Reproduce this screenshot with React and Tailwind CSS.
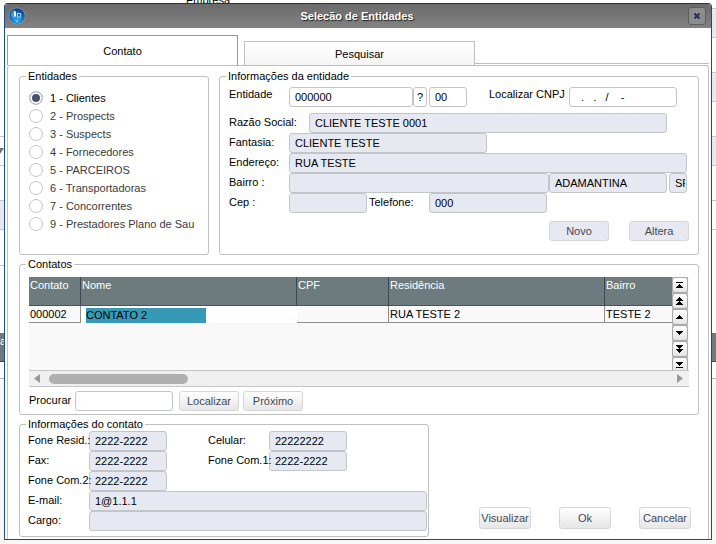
import React, { useState } from 'react';
import clsx from 'clsx';

const entidades = [
  '1 - Clientes',
  '2 - Prospects',
  '3 - Suspects',
  '4 - Fornecedores',
  '5 - PARCEIROS',
  '6 - Transportadoras',
  '7 - Concorrentes',
  '9 - Prestadores Plano de Sau',
];

const navIcons = [
  { label: 'Primeiro', d: 'M3 4h7v1H3z M6 6h1v1h1v1h1v1h1v1H3V9h1V8h1V7h1z' },
  { label: 'Página anterior', d: 'M6 3h1v1h1v1h1v1h1v1H3V6h1V5h1V4h1z M6 7h1v1h1v1h1v1h1v1H3v-1h1V9h1V8h1z' },
  { label: 'Anterior', d: 'M6 5h1v1h1v1h1v1h1v1H3V8h1V7h1V6h1z' },
  { label: 'Próximo registro', d: 'M3 5h7v1H9v1H8v1H7v1H6V8H5V7H4V6H3z' },
  { label: 'Próxima página', d: 'M3 3h7v1H9v1H8v1H7v1H6V6H5V5H4V4H3z M3 7h7v1H9v1H8v1H7v1H6v-1H5V9H4V8H3z' },
  { label: 'Último', d: 'M3 4h7v1H9v1H8v1H7v1H6V7H5V6H4V5H3z M3 9h7v1H3z' },
];

function Group({ title, className, children }) {
  return (
    <fieldset className={clsx('min-w-0 rounded-[3px] border border-[#c0c0c0]', className)}>
      <legend className="ml-[6px] px-[2px] leading-[14px]">{title}</legend>
      {children}
    </fieldset>
  );
}

function Field({ className, white, ...props }) {
  return (
    <input
      type="text"
      className={clsx(
        'h-5 min-w-0 rounded-[3px] border border-[#c3c6c9] pl-[5px] outline-none',
        white ? 'bg-white' : 'bg-[#e6e9f1]',
        className
      )}
      {...props}
    />
  );
}

function Label({ className, ...props }) {
  return <label className={clsx('relative shrink-0 whitespace-nowrap', className)} {...props} />;
}

function Button({ className, children }) {
  return (
    <button
      type="button"
      className={clsx('shrink-0 rounded-[3px] border border-[#d5d7da] text-center text-[#444955]', className)}
    >
      {children}
    </button>
  );
}

// Parts of the main screen that show around the dialog
function Backdrop() {
  return (
    <div className="absolute inset-0 overflow-hidden" aria-hidden="true">
      <div className="absolute inset-x-0 top-[378px] bottom-0 border-t border-[#b5b5b5] bg-[#f8f8f8]" />
      <span className="absolute -top-[7px] left-[186px] leading-[14px]">Empresa</span>
      <div className="absolute top-[8px] right-0 h-[30px] w-3 border-y border-[#c3c6c9] bg-[#e6e9f1]" />
      <div className="absolute top-[72px] right-0 h-[30px] w-3 border-y border-[#c3c6c9] bg-[#e6e9f1]" />
      <div className="absolute top-[136px] right-0 h-[30px] w-3 border-y border-[#c3c6c9] bg-[#e6e9f1]" />
      <div className="absolute top-[200px] right-0 h-[30px] w-3 border-y border-[#c3c6c9]" />
      <div className="absolute top-[136px] left-0 h-[30px] w-3 border-y border-[#c3c6c9]" />
      <svg className="absolute top-[148px] left-0" width="4" height="6">
        <path d="M0 0h4L0 6z" fill="#6b7488" />
      </svg>
      <div className="absolute top-[200px] left-0 h-[30px] w-3 border-y border-[#c3c6c9] bg-[#e6e9f1]" />
      <div className="absolute top-[265px] left-0 h-px w-3 bg-[#c3c6c9]" />
      <div className="absolute inset-x-0 top-[333px] h-[29px] border-b border-[#444] bg-[#6d7b7e] leading-[16px] text-white">
        a
      </div>
    </div>
  );
}

function Logo() {
  return (
    <svg width="18" height="18" viewBox="0 0 18 18">
      <defs>
        <radialGradient id="globe" cx="0.5" cy="0.75" r="0.7">
          <stop offset="0" stopColor="#35b4f0" />
          <stop offset="0.5" stopColor="#1878c8" />
          <stop offset="1" stopColor="#0b3f86" />
        </radialGradient>
      </defs>
      <circle cx="9" cy="9" r="8.5" fill="#8d9dab" />
      <circle cx="9" cy="9" r="7.8" fill="url(#globe)" />
      <path d="M2.500 8A7 7 0 0 1 7 2.500V10.500H4z" fill="#5aa5e0" opacity="0.7" />
      <path d="M6 4.500h2v5H6z" fill="#fff" />
      <path d="M9 6h4v4.500H9z" fill="#9fd2f3" />
      <path d="M10 7h2v2.500h-2z" fill="#1b6fbd" />
      <path d="M8 14h2v1H8z" fill="#8be0ff" />
    </svg>
  );
}

function EntidadeInfo() {
  return (
    <Group title="Informações da entidade" className="flex-1">
      <div className="pt-[4px] pr-[9px] pb-[13px] pl-[9px]">
        <div className="mb-[6px] flex">
          <Label htmlFor="entidade" className="w-[60px] leading-[14px]">Entidade</Label>
          <Field id="entidade" white defaultValue="000000" className="w-[124px]" />
          <button type="button" className="h-5 w-[14px] rounded-[3px] border border-[#c3c6c9] bg-white">?</button>
          <Field aria-label="Loja" white defaultValue="00" className="ml-[2px] w-[38px]" />
          <Label htmlFor="cnpj" className="ml-[22px] w-[80px] leading-[14px]">Localizar CNPJ</Label>
          <Field id="cnpj" white defaultValue="  .   .   /    -" className="w-[108px]" />
        </div>
        <div className="flex pr-[22px]">
          <Label htmlFor="razao" className="w-[80px] leading-[18px]">Razão Social:</Label>
          <Field id="razao" readOnly value="CLIENTE TESTE 0001" className="flex-1" />
        </div>
        <div className="flex">
          <Label htmlFor="fantasia" className="w-[60px] leading-[18px]">Fantasia:</Label>
          <Field id="fantasia" readOnly value="CLIENTE TESTE" className="w-[198px]" />
        </div>
        <div className="flex pr-[2px]">
          <Label htmlFor="endereco" className="w-[60px] leading-[18px]">Endereço:</Label>
          <Field id="endereco" readOnly value="RUA TESTE" className="flex-1" />
        </div>
        <div className="flex pr-[2px]">
          <Label htmlFor="bairro" className="w-[60px] leading-[18px]">Bairro :</Label>
          <Field id="bairro" readOnly value="" className="flex-1" />
          <Field aria-label="Cidade" readOnly value="ADAMANTINA" className="w-[118px]" />
          <Field aria-label="UF" readOnly value="SP" className="ml-[2px] w-[18px] pr-[1px]" />
        </div>
        <div className="flex">
          <Label htmlFor="cep" className="w-[60px] leading-[18px]">Cep :</Label>
          <Field id="cep" readOnly value="" className="w-[78px]" />
          <Label htmlFor="telefone" className="ml-[2px] w-[60px] leading-[18px]">Telefone:</Label>
          <Field id="telefone" readOnly value="000" className="w-[118px]" />
        </div>
        <div className="mt-2 flex justify-end gap-5">
          <Button className="h-5 w-[60px] bg-[#e6e9f1]">Novo</Button>
          <Button className="h-5 w-[60px] bg-[#e6e9f1]">Altera</Button>
        </div>
      </div>
    </Group>
  );
}

function Contatos() {
  const th = 'border-r border-b border-r-[#3f484b] border-b-[#4a5356] px-[1px] text-left align-top font-normal leading-[16px]';
  const td = 'border-r border-b border-[#8f8f8f] px-[1px] leading-[15px]';
  return (
    <Group title="Contatos" className="mt-[2px]">
      <div className="px-[9px] pt-[6px] pb-[3px]">
        <div className="flex h-[93px] bg-[#f9f9f9]">
          <div className="min-w-0 flex-1">
            <table className="w-full table-fixed border-separate border-spacing-0">
              <thead>
                <tr className="h-[29px] bg-[#6d7b7e] text-white">
                  <th className={clsx(th, 'w-[52px]')}>Contato</th>
                  <th className={clsx(th, 'w-[216px]')}>Nome</th>
                  <th className={clsx(th, 'w-[92px]')}>CPF</th>
                  <th className={clsx(th, 'w-[216px]')}>Residência</th>
                  <th className={clsx(th, 'border-r-0')}>Bairro</th>
                </tr>
              </thead>
              <tbody>
                <tr className="h-4">
                  <td className={td}>000002</td>
                  <td className="bg-white pt-[2px] pl-[5px]">
                    <input
                      aria-label="Nome"
                      defaultValue="CONTATO 2"
                      className="block h-[15px] w-[120px] bg-[#369ab6] outline-none"
                    />
                  </td>
                  <td className={td}></td>
                  <td className={td}>RUA TESTE 2</td>
                  <td className={clsx(td, 'border-r-0')}>TESTE 2</td>
                </tr>
              </tbody>
            </table>
          </div>
          <div className="mr-[1px] flex w-4 flex-col overflow-hidden bg-[#bdbdbd]">
            {navIcons.map((n) => (
              <button
                key={n.label}
                type="button"
                aria-label={n.label}
                className="h-4 shrink-0 rounded-[3px] border border-[#a8a8a8] bg-linear-to-b from-white to-[#e4e4e4]"
              >
                <svg width="14" height="14" className="block" shapeRendering="crispEdges">
                  <path d={n.d} fill="#000" />
                </svg>
              </button>
            ))}
          </div>
        </div>
        <div className="flex h-[17px] items-center border-y border-[#c6c6c6] bg-[#f0f0f0] px-[5px]">
          <svg width="7" height="9"><path d="M6 0v9L0 4.500z" fill="#999" /></svg>
          <div className="mx-2 flex-1">
            <div className="h-[10px] w-[139px] rounded-full bg-[#b0b0b0]" />
          </div>
          <svg width="7" height="9"><path d="M0 0v9L6 4.500z" fill="#999" /></svg>
        </div>
        <div className="mt-[4px] flex">
          <Label htmlFor="procurar" className="w-[46px] leading-[18px]">Procurar</Label>
          <Field id="procurar" white className="w-[98px]" />
          <Button className="ml-[6px] h-5 w-[60px] bg-linear-to-b from-white to-[#e6e6e6]">Localizar</Button>
          <Button className="ml-1 h-5 w-[60px] bg-linear-to-b from-white to-[#e6e6e6]">Próximo</Button>
        </div>
      </div>
    </Group>
  );
}

function ContatoInfo() {
  return (
    <Group title="Informações do contato" className="w-[410px]">
      <div className="pr-[1px] pb-[5px] pl-[8px]">
        <div className="flex">
          <Label htmlFor="resid" className="w-[61px] leading-[18px]">Fone Resid.:</Label>
          <Field id="resid" readOnly value="2222-2222" className="w-[78px]" />
          <Label htmlFor="celular" className="ml-[41px] w-[61px] leading-[18px]">Celular:</Label>
          <Field id="celular" readOnly value="22222222" className="w-[78px]" />
        </div>
        <div className="flex">
          <Label htmlFor="fax" className="w-[61px] leading-[18px]">Fax:</Label>
          <Field id="fax" readOnly value="2222-2222" className="w-[78px]" />
          <Label htmlFor="com1" className="ml-[41px] w-[61px] leading-[18px]">Fone Com.1:</Label>
          <Field id="com1" readOnly value="2222-2222" className="w-[78px]" />
        </div>
        <div className="flex">
          <Label htmlFor="com2" className="w-[61px] leading-[18px]">Fone Com.2:</Label>
          <Field id="com2" readOnly value="2222-2222" className="w-[78px]" />
        </div>
        <div className="flex">
          <Label htmlFor="email" className="w-[61px] leading-[18px]">E-mail:</Label>
          <Field id="email" readOnly value="1@1.1.1" className="flex-1" />
        </div>
        <div className="flex">
          <Label htmlFor="cargo" className="w-[61px] leading-[18px]">Cargo:</Label>
          <Field id="cargo" readOnly value="" className="flex-1" />
        </div>
      </div>
    </Group>
  );
}

function App() {
  const [entidade, setEntidade] = useState(entidades[0]);

  return (
    <div className="relative min-h-screen bg-white px-1 pt-[3px] pb-1 font-['Liberation_Sans',Arial,sans-serif] text-[11px] text-black">
      <Backdrop />

      <div className="relative rounded-t-[4px] border border-[#1b4b82] border-t-[#333] bg-white">
        <header className="flex h-6 items-center rounded-t-[3px] bg-linear-to-b from-[#6b6b6b] to-[#828282] px-[3px]">
          <Logo />
          <h1 className="flex-1 text-center font-bold text-white [text-shadow:1px_1px_1px_#222]">Selecão de Entidades</h1>
          <button
            type="button"
            aria-label="Fechar"
            className="mr-[2px] flex size-[18px] items-center justify-center rounded-[3px] border border-[#5c5c5c] bg-[#8c8c8c]"
          >
            <svg width="6" height="6" viewBox="0 0 6 6">
              <path d="M0.500 0.500l5 5M5.500 0.500l-5 5" stroke="#26305a" strokeWidth="2" />
            </svg>
          </button>
        </header>

        <div className="px-[2px] pt-[7px]">
          <div className="flex items-end" role="tablist">
            <button type="button" role="tab" aria-selected="true" className="h-[30px] w-[231px] border border-b-0 border-[#999] bg-white pt-[2px]">
              Contato
            </button>
            <button
              type="button"
              role="tab"
              aria-selected="false"
              className="ml-[6px] h-6 w-[231px] border border-b-0 border-[#c0c0c0] bg-linear-to-b from-white to-[#f4f4f4] pt-[2px]"
            >
              Pesquisar
            </button>
            <div className="mb-[1px] h-px flex-1 bg-[#c0c0c0]" />
          </div>

          <main className="rounded-t-[3px] border border-b-0 border-[#c0c0c0] pt-[3px] pr-[9px] pb-[2px] pl-[11px]">
            <div className="flex gap-[10px]">
              <Group title="Entidades" className="w-[190px] shrink-0">
                <div className="mr-[9px] ml-[9px] overflow-hidden pt-[6px]">
                  {entidades.map((e) => (
                    <label
                      key={e}
                      className={clsx(
                        'flex h-[18px] items-center gap-[7px] whitespace-nowrap',
                        e === entidade ? 'text-black' : 'text-[#3a3a3a]'
                      )}
                    >
                      <input
                        type="radio"
                        name="entidade"
                        checked={e === entidade}
                        onChange={() => setEntidade(e)}
                        className="size-[14px] shrink-0 appearance-none rounded-full border border-[#c4c4c4] bg-white checked:bg-[#44526c] checked:shadow-[inset_0_0_0_2px_white]"
                      />
                      {e}
                    </label>
                  ))}
                </div>
              </Group>
              <EntidadeInfo />
            </div>

            <Contatos />

            <div className="mt-[2px] flex items-end justify-between">
              <ContatoInfo />
              <div className="mr-2 mb-2 flex gap-7">
                <Button className="h-[22px] w-[52px] bg-linear-to-b from-white to-[#e6e6e6]">Visualizar</Button>
                <Button className="h-[22px] w-[52px] bg-linear-to-b from-white to-[#e6e6e6]">Ok</Button>
                <Button className="h-[22px] w-[52px] bg-linear-to-b from-white to-[#e6e6e6]">Cancelar</Button>
              </div>
            </div>
          </main>
        </div>
      </div>
    </div>
  );
}

export default App;
